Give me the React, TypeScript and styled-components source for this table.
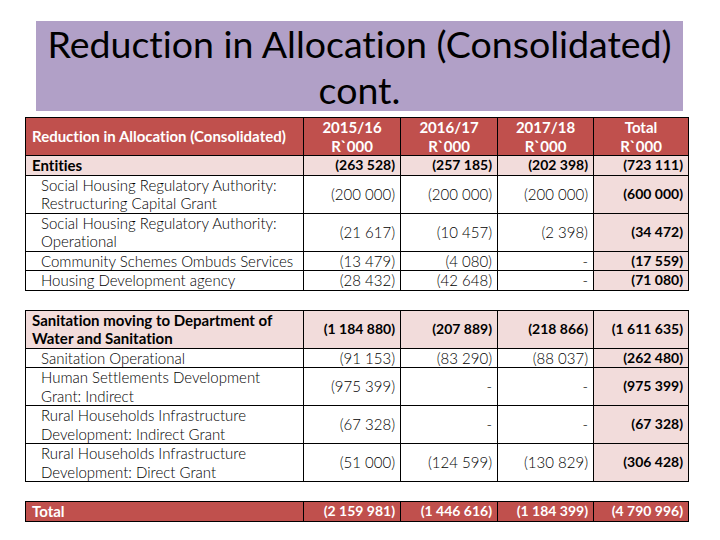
import * as React from 'react';
import styled, { createGlobalStyle } from 'styled-components';

const GlobalStyle = createGlobalStyle`
  html, body {
    margin: 0;
    padding: 0;
    background: #fff;
  }
  body {
    font-family: Lato, 'Open Sans', sans-serif;
    font-variant-ligatures: none;
    color: #000;
  }
  * {
    box-sizing: border-box;
  }
`;

const RED = '#c0504d';
const PINK = '#f2dcdb';

const Slide = styled.div`
  width: 720px;
  height: 540px;
  padding: 21px 0 0 25px;
  display: flex;
  flex-direction: column;
`;

const TitleBox = styled.h1`
  margin: 0 0 6px 11px;
  width: 647px;
  height: 90px;
  background: #b1a0c7;
  font-family: Lato, sans-serif;
  font-variant-ligatures: none;
  font-weight: 400;
  font-size: 37.5px;
  line-height: 46px;
  text-align: center;
  color: #000;
`;

const Table = styled.table<{ $gap?: number }>`
  width: 663px;
  border-collapse: collapse;
  table-layout: fixed;
  margin-top: ${p => p.$gap ?? 0}px;
  font-size: 15px;
  line-height: 18.5px;

  td {
    border: 1px solid #000;
    padding: 0;
    vertical-align: middle;
  }
`;

const HeadCell = styled.td<{ $label?: boolean }>`
  background: ${RED};
  color: #fff;
  font-weight: 700;
  text-align: ${p => (p.$label ? 'left' : 'center')};
  padding: ${p => (p.$label ? '0 0 0 6px' : '0')} !important;
`;

type Tone = 'plain' | 'pink' | 'red';

const LabelCell = styled.td<{ $tone: Tone; $indent?: boolean }>`
  background: ${p => (p.$tone === 'red' ? RED : p.$tone === 'pink' ? PINK : '#fff')};
  color: ${p => (p.$tone === 'red' ? '#fff' : '#000')};
  font-weight: ${p => (p.$tone === 'plain' ? 300 : 700)};
  padding: ${p => (p.$indent ? '0 4px 0 15px' : '0 4px 0 6px')} !important;
`;

const NumCell = styled.td<{ $tone: Tone; $bold?: boolean }>`
  background: ${p => (p.$tone === 'red' ? RED : p.$tone === 'pink' ? PINK : '#fff')};
  color: ${p => (p.$tone === 'red' ? '#fff' : '#000')};
  font-weight: ${p => (p.$bold ? 700 : 300)};
  font-size: ${p => (p.$bold ? 14 : 15)}px;
  text-align: right;
  padding: 0 5px 0 0 !important;
  white-space: nowrap;
`;

type Row = {
  label: string;
  values: string[];
  kind: 'group' | 'item' | 'total';
};

const firstTable: Row[] = [
  { label: 'Entities', values: ['(263 528)', '(257 185)', '(202 398)', '(723 111)'], kind: 'group' },
  {
    label: 'Social Housing Regulatory Authority: Restructuring Capital Grant',
    values: ['(200 000)', '(200 000)', '(200 000)', '(600 000)'],
    kind: 'item',
  },
  {
    label: 'Social Housing Regulatory Authority: Operational',
    values: ['(21 617)', '(10 457)', '(2 398)', '(34 472)'],
    kind: 'item',
  },
  { label: 'Community Schemes Ombuds Services', values: ['(13 479)', '(4 080)', '-', '(17 559)'], kind: 'item' },
  { label: 'Housing Development agency', values: ['(28 432)', '(42 648)', '-', '(71 080)'], kind: 'item' },
];

const secondTable: Row[] = [
  {
    label: 'Sanitation moving to Department of Water and Sanitation',
    values: ['(1 184 880)', '(207 889)', '(218 866)', '(1 611 635)'],
    kind: 'group',
  },
  { label: 'Sanitation Operational', values: ['(91 153)', '(83 290)', '(88 037)', '(262 480)'], kind: 'item' },
  {
    label: 'Human Settlements Development Grant: Indirect',
    values: ['(975 399)', '-', '-', '(975 399)'],
    kind: 'item',
  },
  {
    label: 'Rural Households Infrastructure Development: Indirect Grant',
    values: ['(67 328)', '-', '-', '(67 328)'],
    kind: 'item',
  },
  {
    label: 'Rural Households Infrastructure Development: Direct Grant',
    values: ['(51 000)', '(124 599)', '(130 829)', '(306 428)'],
    kind: 'item',
  },
];

const Cols = () => (
  <colgroup>
    <col style={{ width: 278 }} />
    <col style={{ width: 97 }} />
    <col style={{ width: 97 }} />
    <col style={{ width: 96 }} />
    <col style={{ width: 95 }} />
  </colgroup>
);

const BodyRow = ({ row }: { row: Row }) => {
  const tone: Tone = row.kind === 'total' ? 'red' : row.kind === 'group' ? 'pink' : 'plain';
  return (
    <tr>
      <LabelCell $tone={tone} $indent={row.kind === 'item'}>
        {row.label}
      </LabelCell>
      {row.values.map((v, i) => {
        const isTotalCol = i === 3;
        const cellTone: Tone = tone === 'plain' && isTotalCol ? 'pink' : tone;
        return (
          <NumCell key={i} $tone={cellTone} $bold={tone !== 'plain' || isTotalCol}>
            {v}
          </NumCell>
        );
      })}
    </tr>
  );
};

export default function App() {
  return (
    <Slide>
      <GlobalStyle />
      <TitleBox>
        Reduction in Allocation (Consolidated)
        <br />
        cont.
      </TitleBox>

      <Table>
        <Cols />
        <tbody>
          <tr>
            <HeadCell $label>Reduction in Allocation (Consolidated)</HeadCell>
            <HeadCell>2015/16<br />R`000</HeadCell>
            <HeadCell>2016/17<br />R`000</HeadCell>
            <HeadCell>2017/18<br />R`000</HeadCell>
            <HeadCell>Total<br />R`000</HeadCell>
          </tr>
          {firstTable.map((r, i) => (
            <BodyRow key={i} row={r} />
          ))}
        </tbody>
      </Table>

      <Table $gap={19}>
        <Cols />
        <tbody>
          {secondTable.map((r, i) => (
            <BodyRow key={i} row={r} />
          ))}
        </tbody>
      </Table>

      <Table $gap={19}>
        <Cols />
        <tbody>
          <BodyRow
            row={{ label: 'Total', values: ['(2 159 981)', '(1 446 616)', '(1 184 399)', '(4 790 996)'], kind: 'total' }}
          />
        </tbody>
      </Table>
    </Slide>
  );
}
